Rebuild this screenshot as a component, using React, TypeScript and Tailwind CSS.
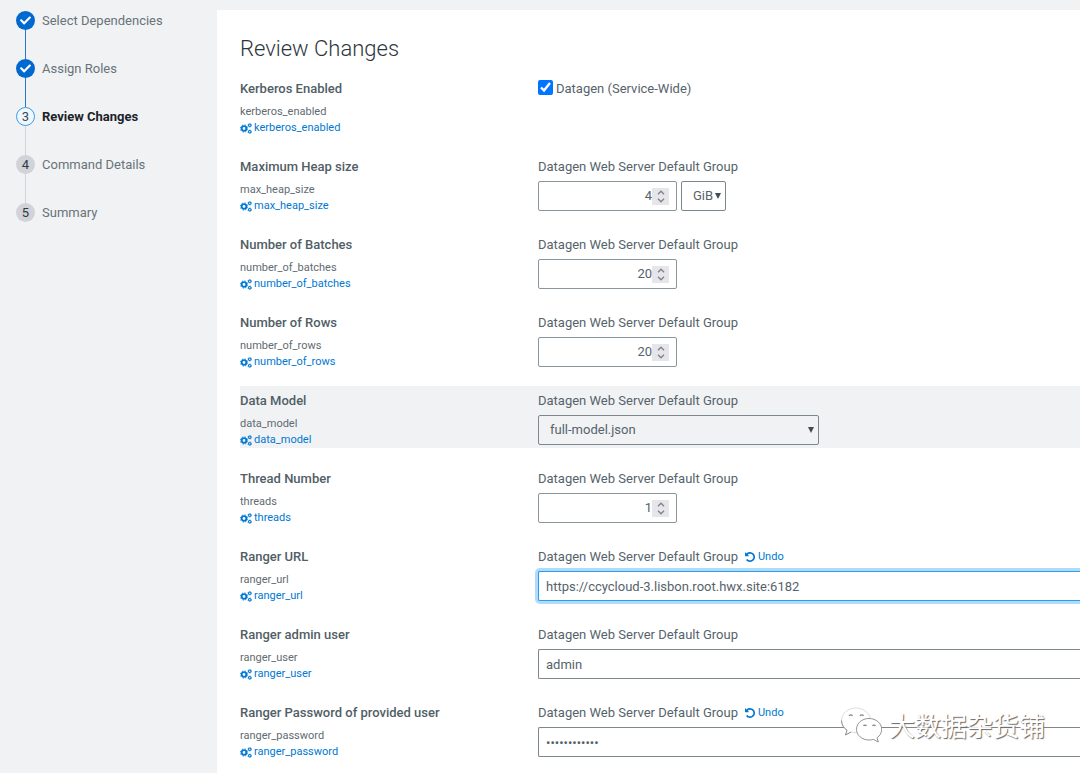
import { ReactNode, useState } from "react";
import { FaCheck } from "react-icons/fa";

type StepState = "done" | "current" | "todo";

const steps: { label: string; state: StepState }[] = [
  { label: "Select Dependencies", state: "done" },
  { label: "Assign Roles", state: "done" },
  { label: "Review Changes", state: "current" },
  { label: "Command Details", state: "todo" },
  { label: "Summary", state: "todo" },
];

const badgeStyles: Record<StepState, string> = {
  done: "bg-[#0069cf] text-white",
  current: "border border-[#3a9be8] bg-[#eff8ff] text-[#3c4a52]",
  todo: "bg-[#d1d3d8] text-[#2f3b43]",
};

const GROUP = "Datagen Web Server Default Group";

function Steps() {
  return (
    <nav aria-label="Wizard steps" className="w-[217px] shrink-0 pl-4 pt-px">
      <ol>
        {steps.map((step, i) => (
          <li key={step.label} className="flex h-12 gap-[7px]">
            <div className="flex w-[19px] flex-col items-center">
              <span
                className={`flex h-[19px] w-[19px] shrink-0 items-center justify-center rounded-full text-[13px] leading-none ${badgeStyles[step.state]}`}
              >
                {step.state === "done" ? <FaCheck size={11} /> : i + 1}
              </span>
              {i < steps.length - 1 && (
                <span className={`w-px flex-1 ${step.state === "done" ? "bg-[#2a78c5]" : "bg-[#d1d3d8]"}`} />
              )}
            </div>
            <span
              className={`h-[19px] leading-[19px] ${step.state === "current" ? "font-bold text-[#1b2329]" : "text-[#68737a]"}`}
            >
              {step.label}
            </span>
          </li>
        ))}
      </ol>
    </nav>
  );
}

function UndoIcon() {
  return (
    <svg viewBox="0 128 1536 1536" className="h-[10px] w-[10px]" fill="currentColor" aria-hidden="true">
      <path d="M1536 896q0 156-61 298t-164 245-245 164-298 61q-172 0-327-72.500t-264-204.500q-7-10-6.500-22.500t8.500-20.500l137-138q10-9 25-9 16 2 23 12 73 95 179 147t225 52q104 0 198.500-40.500t163.500-109.500 109.500-163.500 40.500-198.500-40.500-198.500-109.500-163.500-163.500-109.500-198.500-40.500q-98 0-188 35.500t-160 101.500l137 138q31 30 14 69-17 40-59 40h-448q-26 0-45-19t-19-45v-448q0-42 40-59 39-17 69 14l130 129q107-101 244.500-156.500t284.500-55.500q156 0 298 61t245 164 164 245 61 298z" />
    </svg>
  );
}

function GearsIcon() {
  return (
    <svg viewBox="0 0 24 22" className="h-[11px] w-3" fill="none" stroke="currentColor" aria-hidden="true">
      <circle cx="8" cy="11" r="4.600" strokeWidth="3.600" />
      <circle cx="8" cy="11" r="7.200" strokeWidth="1.800" strokeDasharray="2.830 2.830" />
      <circle cx="19.500" cy="4.600" r="2.500" strokeWidth="2.200" />
      <circle cx="19.500" cy="4.600" r="4" strokeWidth="1" strokeDasharray="2.090 2.090" />
      <circle cx="19.500" cy="17.400" r="2.500" strokeWidth="2.200" />
      <circle cx="19.500" cy="17.400" r="4" strokeWidth="1" strokeDasharray="2.090 2.090" />
    </svg>
  );
}

function Row({
  title,
  name,
  undo,
  active,
  plain,
  children,
}: {
  title: string;
  name: string;
  undo?: boolean;
  active?: boolean;
  plain?: boolean;
  children: ReactNode;
}) {
  return (
    <section
      className={`grid min-h-[62px] grid-cols-[298px_minmax(0,1fr)] pt-[5px] ${active ? "bg-[#f1f2f4]" : ""}`}
    >
      <div>
        <h2 className="font-medium leading-5 text-[#515e66]">{title}</h2>
        <p className="mt-[5px] text-[11px] leading-4 text-[#5f6b72]">{name}</p>
        <a href={`#${name}`} className="flex items-center gap-[2px] text-[11px] leading-4 text-[#0078d2]">
          <GearsIcon />
          {name}
        </a>
      </div>
      {plain ? (
        <div>{children}</div>
      ) : (
        <div>
          <div className="mb-1 flex h-5 items-center gap-[7px] leading-5">
            <label htmlFor={name}>{GROUP}</label>
            {undo && (
              <button type="button" className="flex items-center gap-[3px] text-[11px] text-[#0078d2]">
                <UndoIcon />
                Undo
              </button>
            )}
          </div>
          {children}
        </div>
      )}
    </section>
  );
}

function NumberField({ id, initial }: { id: string; initial: number }) {
  const [value, setValue] = useState(initial);
  return (
    <div className="flex h-[30px] w-[139px] items-center rounded-[2px] border border-[#8b959c] bg-white pr-[7px]">
      <input
        id={id}
        type="number"
        value={value}
        onChange={(e) => setValue(Number(e.target.value))}
        className="min-w-0 flex-1 appearance-none bg-transparent text-right outline-none [-moz-appearance:textfield] [&::-webkit-inner-spin-button]:appearance-none"
      />
      <div className="flex h-[17px] w-[17px] flex-col items-center justify-center gap-[3px] bg-[#e6e5ea] text-[#808187]">
        <button type="button" aria-label="Increase" onClick={() => setValue(value + 1)}>
          <svg viewBox="0 0 8 5" className="block h-[5px] w-2" fill="none" stroke="currentColor" strokeWidth="1.3">
            <path d="M1 4.200 4 1.200l3 3" />
          </svg>
        </button>
        <button type="button" aria-label="Decrease" onClick={() => setValue(value - 1)}>
          <svg viewBox="0 0 8 5" className="block h-[5px] w-2" fill="none" stroke="currentColor" strokeWidth="1.3">
            <path d="M1 .8l3 3 3-3" />
          </svg>
        </button>
      </div>
    </div>
  );
}

function SelectField({
  id,
  label,
  options,
  wide,
}: {
  id: string;
  label?: string;
  options: string[];
  wide?: boolean;
}) {
  return (
    <div className={`relative h-[30px] ${wide ? "w-[281px]" : "w-[45px]"}`}>
      <select
        id={id}
        aria-label={label}
        className="h-full w-full appearance-none rounded-[2px] border border-[#7d878e] bg-transparent pl-[11px] outline-none"
      >
        {options.map((o) => (
          <option key={o}>{o}</option>
        ))}
      </select>
      <svg
        viewBox="0 0 6 6"
        className="pointer-events-none absolute right-[5px] top-3 h-[6px] w-[6px]"
        fill="#444b50"
        aria-hidden="true"
      >
        <path d="M0 0h6L3 6z" />
      </svg>
    </div>
  );
}

function TextField({
  id,
  value,
  type = "text",
  focused,
}: {
  id: string;
  value: string;
  type?: string;
  focused?: boolean;
}) {
  return (
    <input
      id={id}
      type={type}
      defaultValue={value}
      className={`block h-[30px] w-full rounded-l-[2px] border border-r-0 bg-white px-[7px] outline-none ${
        focused ? "border-[#2d9bf0] shadow-[0_0_0_3px_#b0dcfb]" : "border-[#7d878e]"
      }`}
    />
  );
}

function Watermark() {
  return (
    <div className="pointer-events-none absolute right-[35px] top-[706px] flex items-center gap-[7px]">
      <svg viewBox="0 0 42 38" className="h-[38px] w-[42px]" aria-hidden="true">
        <path
          d="M16 2C8 2 1.500 7.500 1.500 14.500c0 4 2 7.500 5.500 9.700L5.500 29l5.500-3c1.600.5 3.300.7 5 .7 8 0 14.500-5.400 14.500-12.200S24 2 16 2z"
          fill="white"
          stroke="#c4c4c4"
          strokeWidth=".6"
        />
        <path d="M1.500 14.500c0 4 2 7.500 5.500 9.700L5.500 29l5.500-3" fill="none" stroke="#888" strokeWidth=".9" />
        <path d="M9 10a2 2 0 0 1 3.500 0M20 10a2 2 0 0 1 3.500 0" fill="none" stroke="#888" strokeWidth="1.200" />
        <path
          d="M29 12.500c-7 0-12.500 4.800-12.500 10.800S22 34 29 34c1.500 0 3-.2 4.300-.6l5 2.600-1.300-4.200c3-2 4.700-5 4.700-8.500 0-6-5.700-10.800-12.700-10.800z"
          fill="white"
          stroke="#888"
          strokeWidth=".9"
        />
        <path d="M23.500 20a1.700 1.700 0 0 1 3 0M32.500 20a1.700 1.700 0 0 1 3 0" fill="none" stroke="#888" strokeWidth="1.200" />
      </svg>
      <span className="font-['Noto_Sans_CJK_SC',sans-serif] text-[26px] leading-[36px] text-white [text-shadow:1px_1px_1px_#666]">
        大数据杂货铺
      </span>
    </div>
  );
}

export default function App() {
  return (
    <div className="relative flex min-h-screen overflow-hidden bg-[#f1f2f4] pt-[10px] font-[Roboto,sans-serif] text-[13px] text-[#56636b]">
      <Steps />
      <main className="min-w-0 flex-1 bg-white pl-[23px] pt-[25px]">
        <h1 className="mb-[11px] text-[22px] font-light leading-7 text-[#2d363c]">Review Changes</h1>
        <form className="flex flex-col gap-4">
          <Row title="Kerberos Enabled" name="kerberos_enabled" plain>
            <label className="flex h-5 items-start gap-[3px] leading-5">
              <input type="checkbox" defaultChecked className="mt-px h-[15px] w-[15px] accent-[#0075ff]" />
              Datagen (Service-Wide)
            </label>
          </Row>
          <Row title="Maximum Heap size" name="max_heap_size">
            <div className="flex gap-1">
              <NumberField id="max_heap_size" initial={4} />
              <SelectField id="heap_unit" label="Heap size unit" options={["GiB", "MiB"]} />
            </div>
          </Row>
          <Row title="Number of Batches" name="number_of_batches">
            <NumberField id="number_of_batches" initial={20} />
          </Row>
          <Row title="Number of Rows" name="number_of_rows">
            <NumberField id="number_of_rows" initial={20} />
          </Row>
          <Row title="Data Model" name="data_model" active>
            <SelectField id="data_model" options={["full-model.json"]} wide />
          </Row>
          <Row title="Thread Number" name="threads">
            <NumberField id="threads" initial={1} />
          </Row>
          <Row title="Ranger URL" name="ranger_url" undo>
            <TextField id="ranger_url" value="https://ccycloud-3.lisbon.root.hwx.site:6182" focused />
          </Row>
          <Row title="Ranger admin user" name="ranger_user">
            <TextField id="ranger_user" value="admin" />
          </Row>
          <Row title="Ranger Password of provided user" name="ranger_password" undo>
            <TextField id="ranger_password" type="password" value="ranger-admin" />
          </Row>
        </form>
      </main>
      <Watermark />
    </div>
  );
}
